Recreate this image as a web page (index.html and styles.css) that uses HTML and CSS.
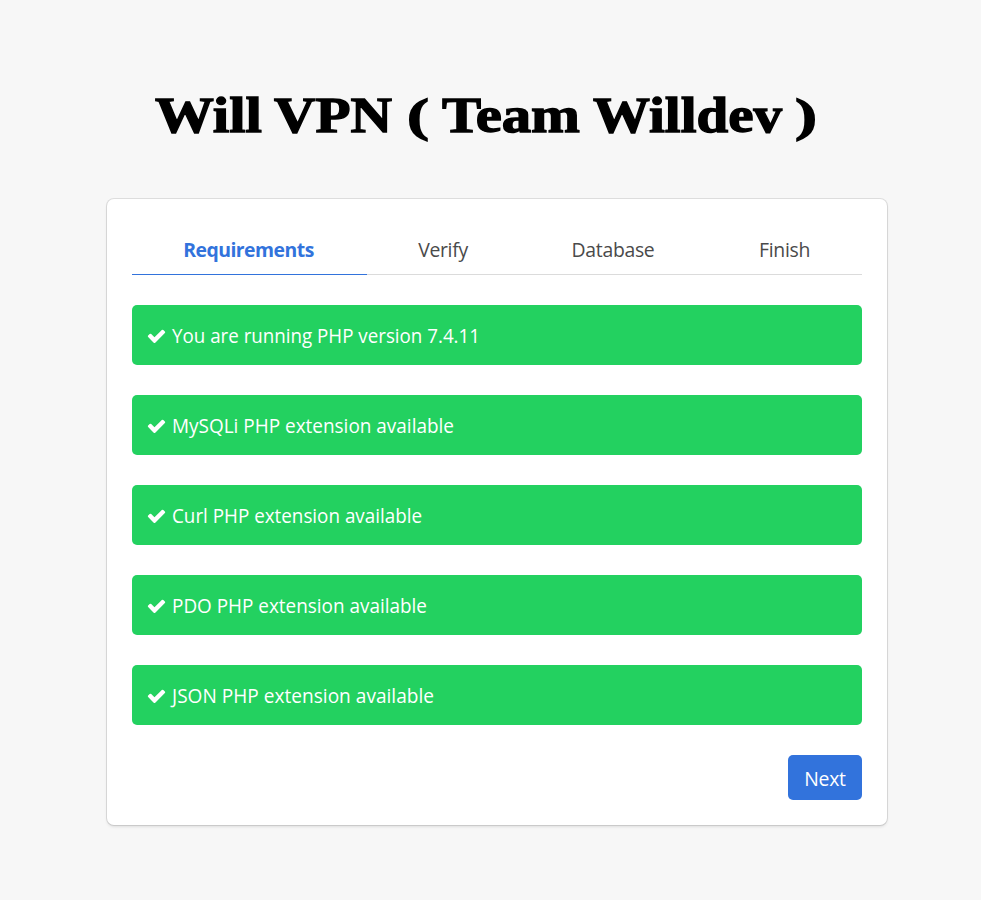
FILE: index.html
```html
<!DOCTYPE html>
<html lang="en">
<head>
<meta charset="utf-8">
<title>Will VPN Installer</title>
<link rel="stylesheet" href="styles.css">
</head>
<body>
<svg class="defs" aria-hidden="true"><symbol id="check" viewBox="0 0 1792 1792"><path d="M1671 566q0 40-28 68l-724 724-136 136q-28 28-68 28t-68-28l-136-136-362-362q-28-28-28-68t28-68l136-136q28-28 68-28t68 28l294 295 656-657q28-28 68-28t68 28l136 136q28 28 28 68z"/></symbol></svg>
<main class="page">
  <h1 class="title"><svg class="title-art" viewBox="0 0 664 60">
    <text x="0" y="42" textLength="107" lengthAdjust="spacingAndGlyphs">Will</text>
    <text x="119" y="42" textLength="118" lengthAdjust="spacingAndGlyphs">VPN</text>
    <text class="paren" x="252" y="41" textLength="22" lengthAdjust="spacingAndGlyphs">(</text>
    <text x="287" y="42" textLength="138" lengthAdjust="spacingAndGlyphs">Team</text>
    <text x="438" y="42" textLength="189" lengthAdjust="spacingAndGlyphs">Willdev</text>
    <text class="paren" x="640" y="41" textLength="22" lengthAdjust="spacingAndGlyphs">)</text>
  </svg></h1>
  <section class="box">
    <nav class="tabs">
      <a class="tab tab-req active"><span>Requirements</span></a>
      <a class="tab tab-verify"><span>Verify</span></a>
      <a class="tab tab-db"><span>Database</span></a>
      <a class="tab tab-finish"><span>Finish</span></a>
    </nav>
    <div class="notice"><svg class="check"><use href="#check"/></svg><svg class="label"><text x="0" y="26" textLength="308" lengthAdjust="spacingAndGlyphs">You are running PHP version 7.4.11</text></svg></div>
    <div class="notice"><svg class="check"><use href="#check"/></svg><svg class="label"><text x="0" y="26" textLength="282" lengthAdjust="spacingAndGlyphs">MySQLi PHP extension available</text></svg></div>
    <div class="notice"><svg class="check"><use href="#check"/></svg><svg class="label"><text x="0" y="26" textLength="250" lengthAdjust="spacingAndGlyphs">Curl PHP extension available</text></svg></div>
    <div class="notice"><svg class="check"><use href="#check"/></svg><svg class="label"><text x="0" y="26" textLength="255" lengthAdjust="spacingAndGlyphs">PDO PHP extension available</text></svg></div>
    <div class="notice"><svg class="check"><use href="#check"/></svg><svg class="label"><text x="0" y="26" textLength="262" lengthAdjust="spacingAndGlyphs">JSON PHP extension available</text></svg></div>
    <div class="actions"><button class="next">Next</button></div>
  </section>
</main>
</body>
</html>
```
FILE: styles.css
```css
* { box-sizing: border-box; }
body { margin: 0; height: 900px; background: #f7f7f7; font: 20px/30px "Open Sans", "Noto Sans", sans-serif; color: #4a4a4a; }
.defs { display: none; }
.page { width: 780px; margin-left: 107px; padding-top: 90px; }
.title { margin: 0 0 49px 48px; height: 60px; }
.title-art { display: block; width: 664px; height: 60px; overflow: visible; font: 900 50px "Liberation Serif", serif; fill: #000; stroke: #000; stroke-width: 1.3px; }
.paren { font-size: 47px; }
.box { height: 626px; padding: 26px 25px 25px; background: #fff; border-radius: 7px; box-shadow: 0 2px 3px rgba(10,10,10,.1), 0 0 0 1px rgba(10,10,10,.1); }
.tabs { display: flex; height: 50px; margin-bottom: 30px; font-size: 19.4px; letter-spacing: -0.3px; }
.tab { display: flex; align-items: center; justify-content: center; border-bottom: 1px solid #dbdbdb; }
.tab-req { width: 235px; }
.tab-verify { width: 152px; }
.tab-db { width: 188px; }
.tab-finish { width: 155px; }
.active { padding-right: 2px; color: #3273dc; font-weight: 700; border-color: #3273dc; letter-spacing: -0.5px; }
.notice { display: flex; align-items: center; height: 60px; margin-bottom: 30px; padding: 2px 0 0 14px; background: #23d160; border-radius: 5px; color: #fff; }
.check { width: 21px; height: 20px; margin-right: 5px; fill: #fff; }
.label { width: 400px; height: 38px; font-size: 19.5px; fill: #fff; overflow: visible; }
.actions { display: flex; justify-content: flex-end; }
.next { width: 74px; height: 45px; padding: 3px 0 0; border: 0; border-radius: 5px; background: #3273dc; color: #fff; font: 19.4px/30px "Open Sans", sans-serif; letter-spacing: -0.3px; }
```
